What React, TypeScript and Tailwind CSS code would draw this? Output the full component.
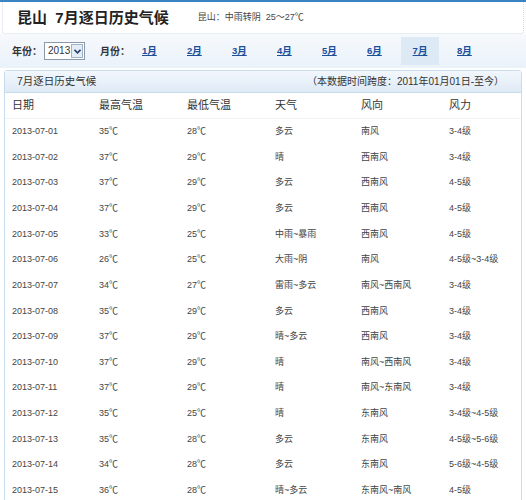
import React from "react"

const rows: string[][] = [
  ["2013-07-01", "35℃", "28℃", "多云", "南风", "3-4级"],
  ["2013-07-02", "37℃", "29℃", "晴", "西南风", "3-4级"],
  ["2013-07-03", "37℃", "29℃", "多云", "西南风", "4-5级"],
  ["2013-07-04", "37℃", "29℃", "多云", "西南风", "4-5级"],
  ["2013-07-05", "33℃", "25℃", "中雨~暴雨", "西南风", "4-5级"],
  ["2013-07-06", "26℃", "25℃", "大雨~阴", "南风", "4-5级~3-4级"],
  ["2013-07-07", "34℃", "27℃", "雷雨~多云", "南风~西南风", "3-4级"],
  ["2013-07-08", "35℃", "29℃", "多云", "西南风", "3-4级"],
  ["2013-07-09", "37℃", "29℃", "晴~多云", "西南风", "3-4级"],
  ["2013-07-10", "37℃", "29℃", "晴", "南风~西南风", "3-4级"],
  ["2013-07-11", "37℃", "29℃", "晴", "南风~东南风", "3-4级"],
  ["2013-07-12", "35℃", "25℃", "晴", "东南风", "3-4级~4-5级"],
  ["2013-07-13", "35℃", "28℃", "多云", "东南风", "4-5级~5-6级"],
  ["2013-07-14", "34℃", "28℃", "多云", "东南风", "5-6级~4-5级"],
  ["2013-07-15", "36℃", "28℃", "晴~多云", "东南风~南风", "4-5级"],
]

const months = ["1月", "2月", "3月", "4月", "5月", "6月", "7月", "8月"]
const heads = ["日期", "最高气温", "最低气温", "天气", "风向", "风力"]
const cols = "grid grid-cols-[87px_88px_88px_86px_88px_1fr]"

export default function App() {
  return (
    <div className="w-[526px] h-[500px] overflow-hidden bg-white text-[#333] font-['Liberation_Sans','Noto_Sans_CJK_SC',sans-serif]">
      <div className="h-[2px] bg-[#3b84c4]" />
      {/* title */}
      <div className="mx-[2px] h-[32px] flex items-center border-x border-b border-dotted border-[#d3dbe3] rounded-b-[3px] pl-[14px]">
        <span className="text-[15px] font-bold text-[#222] leading-none">昆山&nbsp;&nbsp;7月逐日历史气候</span>
        <span className="ml-[29px] text-[9px] text-[#444] leading-none">昆山：中雨转阴&nbsp;&nbsp;25～27℃</span>
      </div>

      {/* filter */}
      <div className="h-[34px] flex items-center bg-gradient-to-b from-[#f6f9fc] to-[#eaf2fa] pl-[12px]">
        <span className="text-[10px] font-bold text-[#333]">年份：</span>
        <div className="ml-[2px] w-[41px] h-[18px] border border-[#8a9aaa] bg-white flex items-center">
          <span className="text-[10px] pl-[3px] flex-1 leading-none">2013</span>
          <div className="w-[12px] h-[14px] mr-[1px] border border-[#9fb3c8] bg-[#e4edf6] flex items-center justify-center">
            <svg width="7" height="5" viewBox="0 0 7 5">
              <path d="M0.5 0.8 L3.5 3.8 L6.5 0.8" stroke="#2a3f66" strokeWidth="1.6" fill="none" />
            </svg>
          </div>
        </div>
        <span className="ml-[15px] text-[10px] font-bold text-[#333]">月份：</span>
        <div className="ml-[12px] flex items-center">
          {months.map((m) => (
            <div
              key={m}
              className={
                m === "7月"
                  ? "w-[38px] h-[28px] -ml-[11px] mr-[18px] flex items-center justify-center bg-[#dde9f5]"
                  : "w-[45px] h-[28px] flex items-center"
              }
            >
              <span className="text-[9.5px] font-bold text-[#1c4f9a] underline">{m}</span>
            </div>
          ))}
        </div>
      </div>

      {/* table */}
      <div className="mt-[2px] ml-[4px] mr-[4px] border border-[#c9dcee] rounded-t-[3px]">
        <div className="h-[22px] flex items-center justify-between bg-gradient-to-b from-[#f2f7fc] to-[#dfeaf6] border-b border-[#c9dcee] pl-[12px] pr-[17px]">
          <span className="text-[10.5px] text-[#333]">7月逐日历史气候</span>
          <span className="text-[10px] text-[#333]">（本数据时间跨度：2011年01月01日-至今）</span>
        </div>
        <div className={`${cols} h-[26px] items-center border-b border-[#f3f3f3]`}>
          {heads.map((h) => (
            <span key={h} className="pl-[7px] text-[11px] text-[#333]">{h}</span>
          ))}
        </div>
        {rows.map((r) => (
          <div key={r[0]} className={`${cols} h-[25.65px] items-center`}>
            {r.map((c, i) => (
              <span key={i} className="pl-[7px] text-[9px] text-[#444] whitespace-nowrap">{c}</span>
            ))}
          </div>
        ))}
      </div>
    </div>
  )
}
